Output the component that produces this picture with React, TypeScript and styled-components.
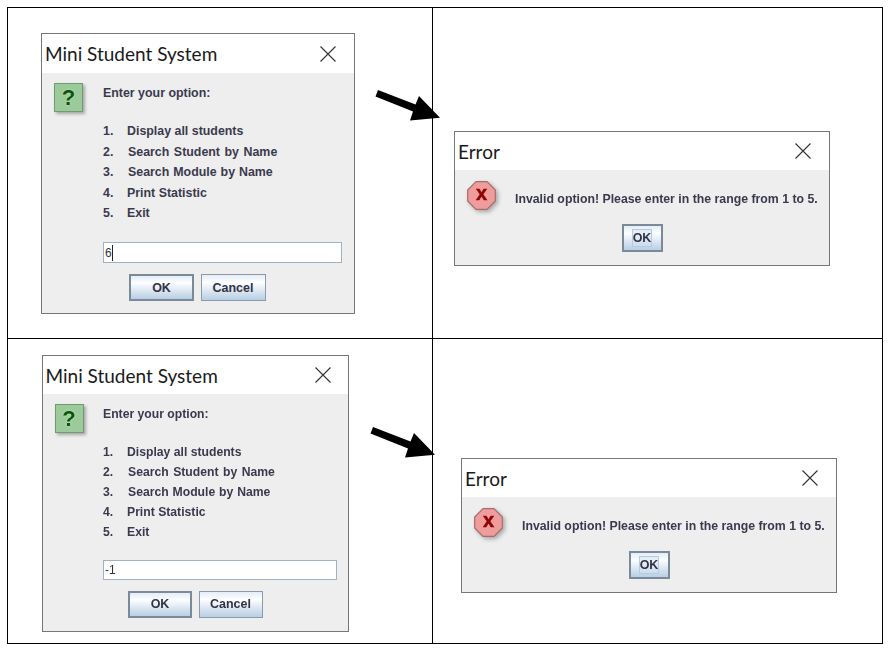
import styled, { createGlobalStyle } from 'styled-components';

const GlobalStyle = createGlobalStyle`
  html, body {
    margin: 0;
    background: #fff;
  }
`;

const questionOptions = [
  { num: '1.', label: 'Display all students', shift: 0, wide: 0 },
  { num: '2.', label: 'Search Student by Name', shift: 1, wide: 1.1 },
  { num: '3.', label: 'Search Module by Name', shift: 1, wide: 0.5 },
  { num: '4.', label: 'Print Statistic', shift: 0, wide: 0 },
  { num: '5.', label: 'Exit', shift: 0, wide: 0 }
];

const CloseIcon = () => (
  <CloseSvg viewBox="0 0 16 16">
    <path d="M0.5 0.5 L15.5 15.5 M15.5 0.5 L0.5 15.5" stroke="#333" strokeWidth="1.1" fill="none" />
  </CloseSvg>
);

const ErrorIcon = () => (
  <ErrorSvg viewBox="0 0 29 29">
    <polygon
      points="9,0.7 20,0.7 28.3,9 28.3,20 20,28.3 9,28.3 0.7,20 0.7,9"
      fill="#ee9c9c"
      stroke="#a86c6c"
      strokeWidth="1.2"
    />
    <text
      x="14.5"
      y="18.5"
      textAnchor="middle"
      fontFamily="'Liberation Sans', sans-serif"
      fontWeight="700"
      fontSize="20"
      fill="#8f0505"
      stroke="#8f0505"
      strokeWidth="0.5"
    >
      x
    </text>
  </ErrorSvg>
);

const Arrow = () => (
  <ArrowSvg viewBox="0 0 66 32">
    <polygon points="3,1 40.5,15.5 44,7 65,28.7 35,31.5 38,22.5 0.5,7.5" fill="#000" />
  </ArrowSvg>
);

interface QuestionDialogProps {
  value: string;
  width: number;
  height: number;
  titleHeight: number;
  closeInset: number;
  iconColumn: number;
  textSize: number;
  rowHeight: number;
  topGap: number;
  listGap: number;
  inputWidth: number;
  inputHeight: number;
  inputGap: number;
  buttonIndent: number;
  buttonGap: number;
  buttonWidth: number;
  buttonHeight: number;
  showCaret?: boolean;
}

const QuestionDialog = (props: QuestionDialogProps) => (
  <Dialog $width={props.width} $height={props.height}>
    <TitleBar $height={props.titleHeight} $closeInset={props.closeInset}>
      <Title>Mini Student System</Title>
      <CloseIcon />
    </TitleBar>
    <QuestionBody $column={props.iconColumn} $size={props.textSize}>
      <QuestionIcon>?</QuestionIcon>
      <QuestionContent $top={props.topGap}>
        <Message $lineHeight={props.rowHeight}>Enter your option:</Message>
        <OptionList $gap={props.listGap}>
          {questionOptions.map(option => (
            <OptionRow key={option.num} $height={props.rowHeight}>
              <OptionNum>{option.num}</OptionNum>
              <OptionLabel $shift={option.shift} $wide={option.wide}>{option.label}</OptionLabel>
            </OptionRow>
          ))}
        </OptionList>
        <InputBox $width={props.inputWidth} $height={props.inputHeight} $gap={props.inputGap}>
          {props.value}
          {props.showCaret && <Caret />}
        </InputBox>
        <ButtonRow $indent={props.buttonIndent} $gap={props.buttonGap}>
          <JavaButton $default $width={props.buttonWidth} $height={props.buttonHeight}>OK</JavaButton>
          <JavaButton $width={props.buttonWidth} $height={props.buttonHeight}>Cancel</JavaButton>
        </ButtonRow>
      </QuestionContent>
    </QuestionBody>
  </Dialog>
);

const ErrorDialog = () => (
  <Dialog $width={376} $height={135}>
    <TitleBar $height={38} $closeInset={18}>
      <Title>Error</Title>
      <CloseIcon />
    </TitleBar>
    <ErrorBody>
      <ErrorTop>
        <ErrorIcon />
        <ErrorText>Invalid option! Please enter in the range from 1 to 5.</ErrorText>
      </ErrorTop>
      <ErrorButton>
        <FocusLabel>OK</FocusLabel>
      </ErrorButton>
    </ErrorBody>
  </Dialog>
);

export default function App() {
  return (
    <>
      <GlobalStyle />
      <Table>
        <Cell $divider $bottom $left={33} $top={25}>
          <QuestionDialog
            value="6"
            showCaret
            width={314}
            height={281}
            titleHeight={39}
            closeInset={18}
            iconColumn={61}
            textSize={12.4}
            rowHeight={20.4}
            topGap={9.5}
            listGap={18.5}
            inputWidth={239}
            inputHeight={21}
            inputGap={19}
            buttonIndent={26}
            buttonGap={6.5}
            buttonWidth={65}
            buttonHeight={27.5}
          />
          <ArrowSpot $left={367} $top={81}>
            <Arrow />
          </ArrowSpot>
        </Cell>
        <Cell $bottom $left={21} $top={123}>
          <ErrorDialog />
        </Cell>
        <Cell $divider $left={33.5} $top={16}>
          <QuestionDialog
            value="-1"
            width={307}
            height={277}
            titleHeight={38}
            closeInset={17}
            iconColumn={60.5}
            textSize={12.2}
            rowHeight={20}
            topGap={9.5}
            listGap={18.5}
            inputWidth={234}
            inputHeight={20}
            inputGap={18}
            buttonIndent={25}
            buttonGap={6.5}
            buttonWidth={64}
            buttonHeight={27}
          />
          <ArrowSpot $left={362} $top={87}>
            <Arrow />
          </ArrowSpot>
        </Cell>
        <Cell $left={28} $top={119}>
          <ErrorDialog />
        </Cell>
      </Table>
    </>
  );
}

const Table = styled.div`
  margin: 7px 0 0 7px;
  width: 876px;
  height: 637px;
  box-sizing: border-box;
  border: 1px solid #000;
  display: grid;
  grid-template-columns: 425px 1fr;
  grid-template-rows: 331px 1fr;
  filter: blur(0.25px);
`;

const Cell = styled.div<{ $divider?: boolean; $bottom?: boolean; $left: number; $top: number }>`
  position: relative;
  box-sizing: border-box;
  padding: ${p => p.$top}px 0 0 ${p => p.$left}px;
  border-right: ${p => (p.$divider ? '1px solid #000' : 'none')};
  border-bottom: ${p => (p.$bottom ? '1px solid #000' : 'none')};
`;

const ArrowSpot = styled.div<{ $left: number; $top: number }>`
  position: absolute;
  left: ${p => p.$left}px;
  top: ${p => p.$top}px;
  line-height: 0;
  z-index: 1;
`;

const ArrowSvg = styled.svg`
  width: 66px;
  height: 32px;
`;

const Dialog = styled.div<{ $width: number; $height: number }>`
  box-sizing: border-box;
  width: ${p => p.$width}px;
  height: ${p => p.$height}px;
  border: 1px solid #777;
  background: #eee;
  display: flex;
  flex-direction: column;
`;

const TitleBar = styled.div<{ $height: number; $closeInset: number }>`
  flex: none;
  box-sizing: border-box;
  height: ${p => p.$height}px;
  background: #fff;
  display: flex;
  align-items: center;
  justify-content: space-between;
  padding: 0 ${p => p.$closeInset}px 0 3px;
`;

const Title = styled.span`
  font-family: 'Lato', sans-serif;
  font-size: 19px;
  color: #1a1a1a;
  white-space: nowrap;
`;

const CloseSvg = styled.svg`
  width: 16px;
  height: 16px;
  flex: none;
`;

const QuestionBody = styled.div<{ $column: number; $size: number }>`
  flex: 1;
  display: grid;
  grid-template-columns: ${p => p.$column}px 1fr;
  font-family: 'Liberation Sans', sans-serif;
  font-size: ${p => p.$size}px;
  font-weight: 700;
  color: #3a3a4e;
`;

const QuestionIcon = styled.div`
  box-sizing: border-box;
  width: 29px;
  height: 29px;
  margin: 10px 0 0 12px;
  border: 1px solid #6f9c6f;
  background: #9dca9b;
  box-shadow: 2px 2px 3px rgba(0, 0, 0, 0.3);
  font-family: 'Liberation Sans', sans-serif;
  font-size: 22px;
  font-weight: 700;
  line-height: 27px;
  text-align: center;
  color: #0b540b;
  text-shadow: 0 0 2px #c8eac6;
`;

const QuestionContent = styled.div<{ $top: number }>`
  padding-top: ${p => p.$top}px;
`;

const Message = styled.div<{ $lineHeight: number }>`
  line-height: ${p => p.$lineHeight}px;
`;

const OptionList = styled.div<{ $gap: number }>`
  margin-top: ${p => p.$gap}px;
`;

const OptionRow = styled.div<{ $height: number }>`
  display: flex;
  height: ${p => p.$height}px;
  line-height: ${p => p.$height}px;
`;

const OptionNum = styled.span`
  width: 24px;
`;

const OptionLabel = styled.span<{ $shift: number; $wide: number }>`
  margin-left: ${p => p.$shift}px;
  word-spacing: ${p => p.$wide}px;
  white-space: nowrap;
`;

const InputBox = styled.div<{ $width: number; $height: number; $gap: number }>`
  box-sizing: border-box;
  width: ${p => p.$width}px;
  height: ${p => p.$height}px;
  margin-top: ${p => p.$gap}px;
  border: 1px solid #a3b1bf;
  background: #fff;
  padding-left: 1px;
  font-weight: 400;
  font-size: 12px;
  line-height: 20px;
  color: #333;
  display: flex;
  align-items: center;
`;

const Caret = styled.span`
  width: 1px;
  height: 16px;
  background: #222;
  margin-left: 0.5px;
`;

const ButtonRow = styled.div<{ $indent: number; $gap: number }>`
  display: flex;
  gap: ${p => p.$gap}px;
  padding-left: ${p => p.$indent}px;
  margin-top: 10.5px;
`;

const JavaButton = styled.div<{ $default?: boolean; $width: number; $height: number }>`
  box-sizing: border-box;
  width: ${p => p.$width}px;
  height: ${p => p.$height}px;
  border: ${p => (p.$default ? '2px solid #7a8a99' : '1px solid #8b9bab')};
  background: linear-gradient(180deg, #e4edf6 0%, #fdfeff 30%, #d5e2ef 70%, #b8cfe5 100%);
  font-size: 12.5px;
  font-weight: 700;
  color: #333346;
  display: flex;
  align-items: center;
  justify-content: center;
`;

const ErrorBody = styled.div`
  flex: 1;
  display: flex;
  flex-direction: column;
  align-items: center;
  font-family: 'Liberation Sans', sans-serif;
  font-size: 12.3px;
  font-weight: 700;
  color: #3a3a4e;
`;

const ErrorTop = styled.div`
  align-self: stretch;
  box-sizing: border-box;
  display: flex;
  padding: 11px 0 0 12px;
  height: 54px;
`;

const ErrorSvg = styled.svg`
  width: 29px;
  height: 29px;
  flex: none;
  filter: drop-shadow(2px 2px 2px rgba(0, 0, 0, 0.3));
`;

const ErrorText = styled.div`
  margin: 7.5px 0 0 19px;
  line-height: 20px;
  white-space: nowrap;
`;

const ErrorButton = styled.div`
  box-sizing: border-box;
  width: 41px;
  height: 27.5px;
  border: 2px solid #7a8a99;
  background: linear-gradient(180deg, #e4edf6 0%, #fdfeff 30%, #d5e2ef 70%, #b8cfe5 100%);
  display: flex;
  align-items: center;
  justify-content: center;
`;

const FocusLabel = styled.span`
  box-sizing: border-box;
  width: 20px;
  height: 18.5px;
  border: 1px solid #b4cbe1;
  background: rgba(210, 226, 242, 0.5);
  display: flex;
  align-items: center;
  justify-content: center;
  font-size: 12.5px;
  color: #333346;
`;
